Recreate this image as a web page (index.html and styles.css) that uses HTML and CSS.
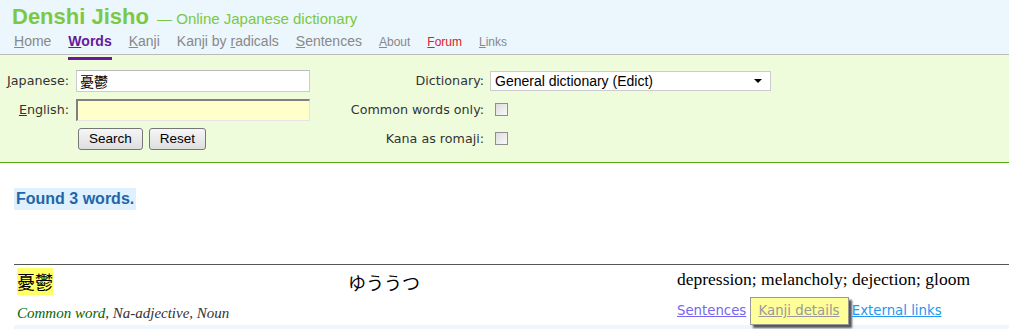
FILE: index.html
```html
<!DOCTYPE html>
<html lang="en">
<head>
  <meta charset="UTF-8">
  <title>Denshi Jisho - Words</title>
  <link rel="stylesheet" href="styles.css">
</head>
<body>
  <div class="header">
    <h1 class="logo">Denshi Jisho <span class="tagline">— Online Japanese dictionary</span></h1>
    <ul class="nav">
      <li><a href="#"><u>H</u>ome</a></li>
      <li><a href="#" class="active"><u>W</u>ords</a></li>
      <li><a href="#"><u>K</u>anji</a></li>
      <li><a href="#">Kanji by <u>r</u>adicals</a></li>
      <li><a href="#"><u>S</u>entences</a></li>
      <li class="small"><a href="#"><u>A</u>bout</a></li>
      <li class="small"><a href="#" class="forum"><u>F</u>orum</a></li>
      <li class="small"><a href="#"><u>L</u>inks</a></li>
    </ul>
  </div>

  <form class="search-form">
    <label class="label left"><u>J</u>apanese:</label>
    <div class="field"><input type="text" class="text-input" value="憂鬱"></div>
    <label class="label right">Dictionary:</label>
    <div class="field">
      <span class="select-wrap">
        <select class="dict-select">
          <option>General dictionary (Edict)</option>
        </select>
      </span>
    </div>

    <label class="label left"><u>E</u>nglish:</label>
    <div class="field"><input type="text" class="text-input focused"></div>
    <label class="label right">Common words only:</label>
    <div class="field"><input type="checkbox" class="check"></div>

    <div></div>
    <div class="field buttons">
      <button type="button" class="btn">Search</button>
      <button type="button" class="btn">Reset</button>
    </div>
    <label class="label right">Kana as romaji:</label>
    <div class="field"><input type="checkbox" class="check"></div>
  </form>

  <div class="results">
    <div class="found">Found 3 words.</div>

    <table class="word-table">
      <tr class="word-row">
        <td class="kanji-cell"><span class="kanji">憂鬱</span></td>
        <td class="kana-cell">ゆううつ</td>
        <td class="meaning-cell">depression; melancholy; dejection; gloom</td>
      </tr>
      <tr class="tags-row">
        <td colspan="2" class="tags"><span class="common">Common word</span>, Na-adjective, Noun</td>
        <td class="links">
          <a href="#" class="link visited">Sentences</a>
          <a href="#" class="link hovered">Kanji details</a>
          <a href="#" class="link external">External links</a>
        </td>
      </tr>
    </table>
    <div class="row-sep"></div>
  </div>
</body>
</html>
```

FILE: styles.css
```css
body {
  margin: 0;
  font-family: "Liberation Sans", Arial, sans-serif;
  background-color: #fff;
  color: #000;
}
.header {
  background-color: #ecf6fd;
  border-bottom: 1px solid #bbb;
  padding: 5px 0 0 12px;
  height: 49px;
}
.logo {
  margin: 0;
  font-size: 22px;
  line-height: 24px;
  font-weight: bold;
  color: #7ac943;
}
.tagline {
  font-size: 15px;
  font-weight: normal;
  margin-left: 2px;
}
.nav {
  list-style: none;
  margin: 2px 0 0 2px;
  padding: 0;
  display: flex;
  align-items: baseline;
  gap: 17px;
}
.nav li {
  font-size: 14px;
  line-height: 17px;
}
.nav li.small {
  font-size: 12px;
}
.nav a {
  color: #888;
  text-decoration: none;
  position: relative;
}
.nav a.active {
  color: #661a99;
  font-weight: bold;
}
.nav a.active::after {
  content: '';
  position: absolute;
  left: 0;
  right: 0;
  bottom: -11px;
  height: 3px;
  background-color: #661a99;
}
.nav a.forum {
  color: #dd2222;
}
.search-form {
  display: grid;
  grid-template-columns: 71px 234px 180px 281px;
  grid-auto-rows: 29px;
  align-items: center;
  padding: 11px 0 9px 5px;
  background-color: #eefcdc;
  border-bottom: 1px solid #55aa11;
  font-family: "DejaVu Sans", Verdana, sans-serif;
  font-size: 12.7px;
  color: #333;
}
.label {
  white-space: nowrap;
}
.label.left {
  text-align: right;
  padding-right: 7px;
}
.label.right {
  text-align: right;
  padding-right: 6px;
}
.field {
  display: flex;
  align-items: center;
}
.text-input {
  box-sizing: border-box;
  width: 234px;
  height: 22px;
  margin: 0;
  padding: 1px 3px;
  border: 1px solid #ccc;
  border-top-color: #bbb;
  background-color: #fff;
  font-family: "Noto Sans CJK JP", sans-serif;
  font-size: 14px;
  color: #000;
}
.text-input.focused {
  background-color: #ffffcc;
  border-style: solid;
  border-width: 2px 1px 1px 2px;
  border-color: #808080 #e4e4e4 #e4e4e4 #808080;
}
.buttons {
  gap: 6px;
  padding-left: 2px;
}
.btn {
  height: 22px;
  padding: 0 10px;
  font-family: "Liberation Sans", Arial, sans-serif;
  font-size: 13.5px;
  color: #000;
  background: linear-gradient(#f6f6f6, #dedede);
  border: 1px solid #777;
  border-radius: 3px;
}
.select-wrap {
  position: relative;
  display: inline-block;
}
.select-wrap::after {
  content: '';
  position: absolute;
  right: 9px;
  top: 8px;
  border-left: 4px solid transparent;
  border-right: 4px solid transparent;
  border-top: 4px solid #000;
  pointer-events: none;
}
.dict-select {
  appearance: none;
  -webkit-appearance: none;
  width: 281px;
  height: 20px;
  margin: 0;
  padding: 0 4px;
  border: 1px solid #ccc;
  border-radius: 0;
  background-color: #fff;
  font-family: "Liberation Sans", Arial, sans-serif;
  font-size: 14px;
  color: #000;
}
.check {
  appearance: none;
  -webkit-appearance: none;
  width: 13px;
  height: 13px;
  margin: 0 0 0 5px;
  border: 1px solid #8f8f8f;
  background: linear-gradient(135deg, #dcdcdc, #fafafa);
}
.results {
  padding: 25px 0 0 14px;
}
.found {
  display: inline-block;
  background-color: #dff0fe;
  color: #2266a8;
  font-size: 16px;
  font-weight: bold;
  line-height: 22px;
  padding: 0 2px;
}
.word-table {
  width: 100%;
  margin-top: 54px;
  border-collapse: collapse;
  border-top: 1px solid #555;
}
.word-table td {
  padding: 0;
  vertical-align: top;
}
.kanji-cell {
  width: 331px;
  padding: 3px 0 0 3px !important;
}
.kanji {
  display: inline-block;
  background-color: #ffff66;
  font-family: "Noto Sans CJK JP", sans-serif;
  font-size: 18px;
  line-height: 27px;
}
.kana-cell {
  width: 329px;
  padding-top: 5px !important;
  font-family: "Noto Sans CJK JP", sans-serif;
  font-size: 18px;
  line-height: 24px;
}
.meaning-cell {
  padding-top: 4px !important;
  font-family: "Liberation Serif", "Times New Roman", serif;
  font-size: 17.5px;
  line-height: 20px;
}
.tags {
  padding: 10px 0 0 3px !important;
  font-family: "Liberation Serif", "Times New Roman", serif;
  font-style: italic;
  font-size: 15px;
  color: #333;
}
.common {
  color: #006600;
}
.links {
  padding-top: 2px !important;
  font-family: "DejaVu Sans", Verdana, sans-serif;
  font-size: 13.3px;
  line-height: 26px;
  white-space: nowrap;
}
.link {
  text-decoration: underline;
}
.link.visited {
  color: #7766ee;
}
.link.hovered {
  display: inline-block;
  color: #999;
  background-color: #ffff99;
  border: 1px solid #999;
  padding: 0 8px;
  margin: 0 -1px;
  box-shadow: 3px 3px 2px #555;
}
.link.external {
  color: #2299ee;
}
.row-sep {
  height: 5px;
  background-color: #eef7fd;
}
```
